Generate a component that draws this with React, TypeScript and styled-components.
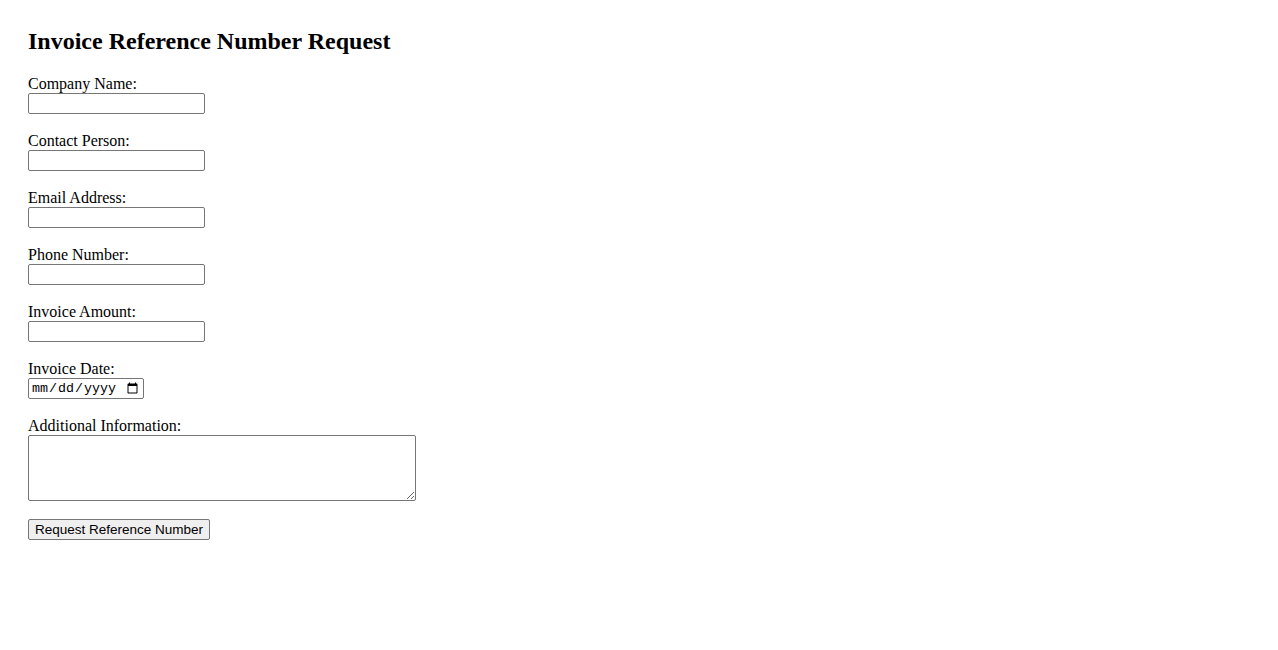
import React from "react";
import styled, { createGlobalStyle } from "styled-components";

const GlobalStyle = createGlobalStyle`
  html, body { margin: 0; padding: 0; background: #ffffff; }
  body { font-family: "Liberation Serif", "Times New Roman", serif; color: #000000; }
`;

const Page = styled.div`
  padding: 28px;
  font-family: "Liberation Serif", "Times New Roman", serif;
  font-size: 16px;
`;

const Title = styled.h2`
  margin: 0 0 20px 0;
  font-size: 24px;
  line-height: 27px;
  font-weight: bold;
`;

const Form = styled.form`
  display: flex;
  flex-direction: column;
  align-items: flex-start;
`;

const Field = styled.div`
  display: flex;
  flex-direction: column;
  align-items: flex-start;
  margin-bottom: 18px;
`;

const Label = styled.label`
  display: block;
  height: 18px;
  line-height: 18px;
  font-size: 16px;
`;

const TextInput = styled.input<{ $width?: number }>`
  box-sizing: border-box;
  width: ${(p) => p.$width ?? 177}px;
  height: 21px;
  margin: 0;
  padding: 1px 2px;
  border: 1px solid #767676;
  border-radius: 2px;
  background: #ffffff;
  font-family: "Liberation Sans", Arial, sans-serif;
  font-size: 13.33px;
`;

const DateInput = styled.input`
  box-sizing: border-box;
  width: 116px;
  height: 21px;
  margin: 0;
  padding: 1px 2px;
  border: 1px solid #767676;
  border-radius: 2px;
  background: #ffffff;
  font-family: "Liberation Mono", "DejaVu Sans Mono", monospace;
  font-size: 13.33px;
`;

const TextArea = styled.textarea`
  box-sizing: border-box;
  width: 388px;
  height: 66px;
  margin: 0;
  padding: 2px;
  border: 1px solid #767676;
  border-radius: 2px;
  font-family: "Liberation Mono", monospace;
  font-size: 13.33px;
`;

const SubmitButton = styled.button`
  box-sizing: border-box;
  width: 182px;
  height: 21px;
  margin: 0;
  padding: 1px 6px;
  border: 1px solid #767676;
  border-radius: 2px;
  background: #efefef;
  color: #000000;
  font-family: "Liberation Sans", Arial, sans-serif;
  font-size: 13.5px;
  line-height: 16px;
  white-space: nowrap;
  cursor: pointer;
`;

const fields = [
  { id: "company", label: "Company Name:", type: "text" },
  { id: "contact", label: "Contact Person:", type: "text" },
  { id: "email", label: "Email Address:", type: "email" },
  { id: "phone", label: "Phone Number:", type: "tel" },
  { id: "amount", label: "Invoice Amount:", type: "text" },
];

export default function App() {
  return (
    <>
      <GlobalStyle />
      <Page>
        <Title>Invoice Reference Number Request</Title>
        <Form onSubmit={(e) => e.preventDefault()}>
          {fields.map((f) => (
            <Field key={f.id}>
              <Label htmlFor={f.id}>{f.label}</Label>
              <TextInput id={f.id} type={f.type} />
            </Field>
          ))}
          <Field>
            <Label htmlFor="date">Invoice Date:</Label>
            <DateInput id="date" type="date" />
          </Field>
          <Field>
            <Label htmlFor="info">Additional Information:</Label>
            <TextArea id="info" rows={4} cols={50} />
          </Field>
          <SubmitButton type="submit">Request Reference Number</SubmitButton>
        </Form>
      </Page>
    </>
  );
}
